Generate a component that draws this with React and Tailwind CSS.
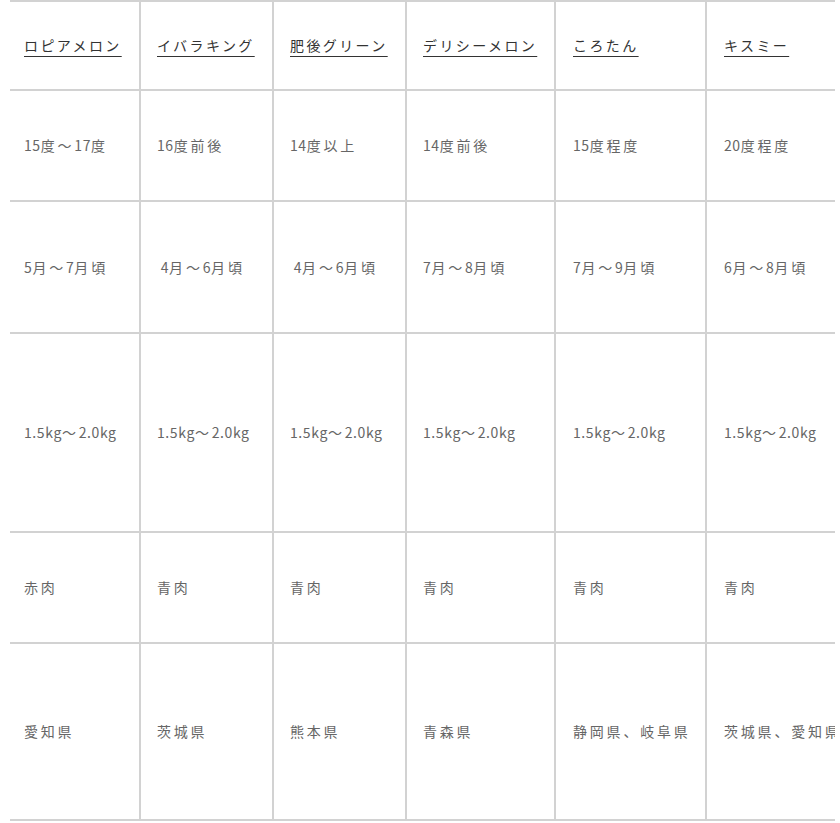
import React from "react";

const heads = ["ロピアメロン", "イバラキング", "肥後グリーン", "デリシーメロン", "ころたん", "キスミー"];
const rows = [
  { h: "h-[111px]", cells: ["15度〜17度", "16度前後", "14度以上", "14度前後", "15度程度", "20度程度"] },
  { h: "h-[132px]", cells: ["5月〜7月頃", "\u00a04月〜6月頃", "\u00a04月〜6月頃", "7月〜8月頃", "7月〜9月頃", "6月〜8月頃"] },
  { h: "h-[199px]", cells: ["1.5kg〜2.0kg", "1.5kg〜2.0kg", "1.5kg〜2.0kg", "1.5kg〜2.0kg", "1.5kg〜2.0kg", "1.5kg〜2.0kg"] },
  { h: "h-[111px]", cells: ["赤肉", "青肉", "青肉", "青肉", "青肉", "青肉"] },
  { h: "h-[177px]", cells: ["愛知県", "茨城県", "熊本県", "青森県", "静岡県、岐阜県", "茨城県、愛知県"] },
];
const widths = ["w-[131px]", "w-[133px]", "w-[133px]", "w-[149px]", "w-[151px]", "w-[170px]"];
const pads = ["pl-[14px]", "pl-[16px]", "pl-[16px]", "pl-[16px]", "pl-[17px]", "pl-[17px]"];

function Runs({ text }) {
  const parts = text.match(/[\x00-\x7e\u00a0]+|[^\x00-\x7e\u00a0]+/g) || [];
  return parts.map((p, i) =>
    /^[\x00-\x7e\u00a0]+$/.test(p) ? (
      <span key={i} className="tracking-[0.6px]">{p}</span>
    ) : (
      <span key={i} className="tracking-[2.8px]">{p}</span>
    )
  );
}

export default function App() {
  return (
    <div className="bg-white min-h-[823px] w-[840px] pl-[10px] pr-[5px]" style={{ fontFamily: '"Noto Sans CJK JP", "Noto Sans", sans-serif' }}>
      <div className="overflow-hidden w-[825px]">
        <table className="border-separate border-spacing-0 table-fixed w-[867px] border-t-2 border-[#d2d2d2]">
          <colgroup>
            {widths.map((w, i) => (
              <col key={i} className={w} />
            ))}
          </colgroup>
          <tbody>
            <tr>
              {heads.map((t, i) => (
                <td key={i} className={`${pads[i]} h-[89px] border-r-2 border-b-2 border-[#d2d2d2] pr-2 align-middle text-[14px] tracking-[2.4px] text-[#333] whitespace-nowrap`}>
                  <span className="underline underline-offset-[5px] decoration-[#333]">{t}</span>
                </td>
              ))}
            </tr>
            {rows.map((r, ri) => (
              <tr key={ri}>
                {r.cells.map((t, i) => (
                  <td key={i} className={`${r.h} ${pads[i]} border-r-2 border-b-2 border-[#d2d2d2] pr-2 align-middle text-[14px] text-[#666] whitespace-nowrap`}>
                    <Runs text={t} />
                  </td>
                ))}
              </tr>
            ))}
          </tbody>
        </table>
      </div>
    </div>
  );
}
